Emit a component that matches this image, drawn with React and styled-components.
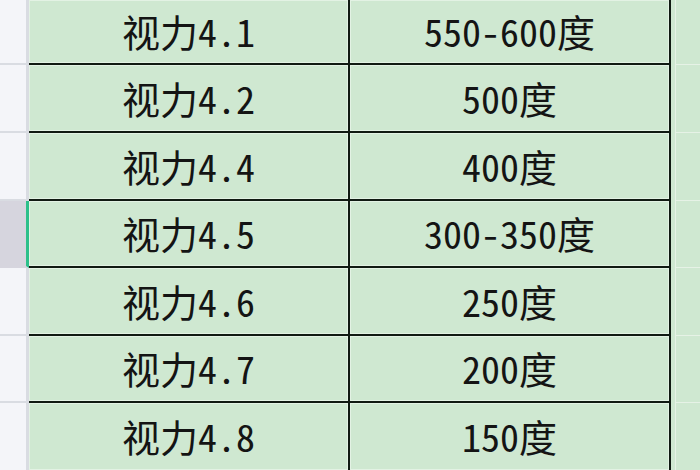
import React from "react";
import styled, { createGlobalStyle } from "styled-components";

const Global = createGlobalStyle`
  html, body { margin: 0; padding: 0; background: #cfe8d1; overflow: hidden; }
  #root { width: 700px; height: 470px; overflow: hidden; }
`;

const Sheet = styled.div`
  width: 700px;
  height: 470px;
  display: flex;
  flex-direction: column;
  background: #cfe8d1;
  font-family: "Noto Sans Mono CJK SC", "Liberation Mono", "Noto Sans CJK SC", monospace;
  color: #141414;
`;

const Row = styled.div`
  display: grid;
  grid-template-columns: 29px 321px 321px 1fr;
  height: ${(p) => p.$h}px;
  flex: none;
`;

const RowHeader = styled.div`
  background: ${(p) => (p.$selected ? "#d6d5de" : "#f4f5f9")};
  border-right: 3px solid ${(p) => (p.$selected ? "#2cc08a" : "#d9dce2")};
  border-bottom: 2px solid ${(p) => (p.$selected ? "#d6d5de" : "#d9dce2")};
`;

const Cell = styled.div`
  display: flex;
  align-items: center;
  justify-content: center;
  background: #cfe8d1;
  border-right: 2px solid #101a12;
  border-bottom: 2px solid #101a12;
  box-shadow: inset 1px 1px 0 #e3f2e4, inset -1px -1px 0 #e3f2e4;
  font-size: 38px;
  line-height: 1;
  padding-bottom: 1px;
  white-space: nowrap;
`;

const Filler = styled.div`
  background: #cfe8d1;
  border-bottom: 1px solid #e6f2e6;
  border-left: 1px solid #e6f2e6;
  margin-left: 4px;
`;

const rows = [
  { a: "视力4.1", b: "550-600度", h: 65 },
  { a: "视力4.2", b: "500度", h: 68 },
  { a: "视力4.4", b: "400度", h: 68 },
  { a: "视力4.5", b: "300-350度", h: 67, sel: true },
  { a: "视力4.6", b: "250度", h: 68 },
  { a: "视力4.7", b: "200度", h: 67 },
  { a: "视力4.8", b: "150度", h: 69 },
];

export default function App() {
  return (
    <>
      <Global />
      <Sheet>
        {rows.map((r) => (
          <Row key={r.a} $h={r.h}>
            <RowHeader $selected={r.sel} />
            <Cell>{r.a}</Cell>
            <Cell>{r.b}</Cell>
            <Filler />
          </Row>
        ))}
      </Sheet>
    </>
  );
}
